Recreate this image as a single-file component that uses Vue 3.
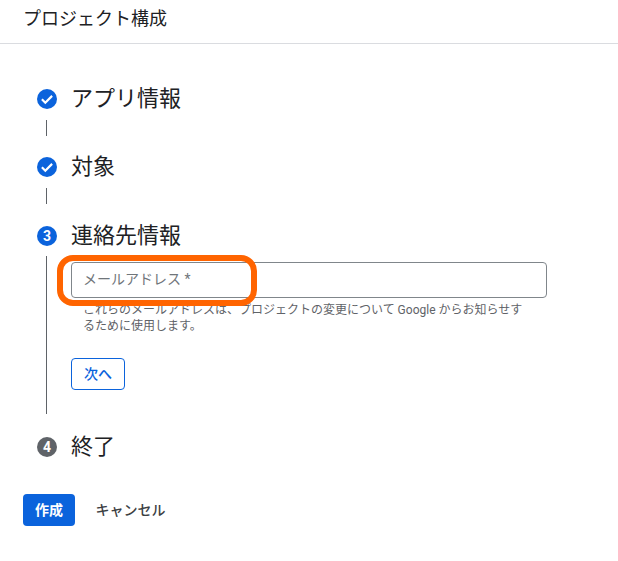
<script setup>
const steps = 4
</script>

<template>
  <div class="page">
    <header class="top">プロジェクト構成</header>
    <main class="steps">
      <section class="step">
        <div class="head">
          <svg class="badge" viewBox="0 0 20 20"><circle cx="10" cy="10" r="10" fill="#0b63dc" /><path d="M4.9 10.3 8.3 13.7 15.1 6.9" fill="none" stroke="#fff" stroke-width="2.2" /></svg>
          <h2>アプリ情報</h2>
        </div>
        <div class="link"></div>
      </section>
      <section class="step">
        <div class="head">
          <svg class="badge" viewBox="0 0 20 20"><circle cx="10" cy="10" r="10" fill="#0b63dc" /><path d="M4.9 10.3 8.3 13.7 15.1 6.9" fill="none" stroke="#fff" stroke-width="2.2" /></svg>
          <h2>対象</h2>
        </div>
        <div class="link"></div>
      </section>
      <section class="step third">
        <div class="head">
          <span class="badge num">3</span>
          <h2>連絡先情報</h2>
        </div>
        <div class="body">
          <div class="field">
            <span class="placeholder">メールアドレス *</span>
            <span class="mark"></span>
          </div>
          <p class="help">これらのメールアドレスは、プロジェクトの変更について Google からお知らせするために使用します。</p>
          <button class="next">次へ</button>
        </div>
      </section>
      <section class="step last">
        <div class="head">
          <span class="badge num grey">4</span>
          <h2>終了</h2>
        </div>
      </section>
    </main>
    <footer class="actions">
      <button class="create">作成</button>
      <button class="cancel">キャンセル</button>
    </footer>
  </div>
</template>

<style scoped>
.page {
  width: 618px;
  height: 561px;
  background: #fff;
  color: #202124;
  font-family: Roboto, "Noto Sans CJK JP", sans-serif;
  overflow: hidden;
}
.top {
  box-sizing: border-box;
  border-bottom: 1px solid #dadce0;
  height: 44px;
  padding: 6px 0 0 23px;
  font-size: 18px;
  line-height: 26px;
}
.steps {
  padding: 41px 0 0 37px;
}
.step {
  display: flex;
  flex-direction: column;
}
.step + .step {
  margin-top: 17px;
}
.step.third {
  margin-top: 18px;
}
.step.last {
  margin-top: 19px;
}
.head {
  display: flex;
  align-items: center;
  height: 28px;
  gap: 14px;
}
.head h2 {
  margin: 0;
  font-size: 22px;
  font-weight: 400;
  line-height: 28px;
}
.badge {
  width: 20px;
  height: 20px;
  flex: none;
}
.num {
  display: flex;
  align-items: center;
  justify-content: center;
  border-radius: 50%;
  background: #0b63dc;
  color: #fff;
  font-size: 14px;
  font-weight: 700;
}
.grey {
  background: #5f6368;
}
.link {
  width: 1px;
  height: 16px;
  margin: 7px 0 0 9px;
  background: #5f6368;
}
.body {
  margin: 6px 0 0 9px;
  border-left: 1px solid #5f6368;
  padding: 6px 0 24px 24px;
  display: flex;
  flex-direction: column;
  align-items: flex-start;
}
.field {
  position: relative;
  width: 476px;
  height: 36px;
  box-sizing: border-box;
  border: 1px solid #80868b;
  border-radius: 4px;
  padding-left: 11px;
  line-height: 32px;
  font-size: 14px;
  color: #70757a;
}
.mark {
  position: absolute;
  left: -15px;
  top: -8px;
  width: 200px;
  height: 51px;
  box-sizing: border-box;
  border: 6px solid #ff6400;
  border-radius: 16px;
}
.help {
  width: 444px;
  margin: 4px 0 0 12px;
  font-size: 12px;
  line-height: 16px;
  color: #5f6368;
}
.next {
  margin-top: 24px;
  width: 54px;
  height: 32px;
  padding: 0 0 2px;
  background: #fff;
  border: 1px solid #0b63dc;
  border-radius: 4px;
  color: #0b63dc;
  font: 500 14px Roboto, "Noto Sans CJK JP", sans-serif;
}
.actions {
  display: flex;
  align-items: center;
  gap: 12px;
  margin: 33px 0 0 23px;
}
.create {
  width: 52px;
  height: 32px;
  padding: 0 0 2px;
  border: 0;
  border-radius: 4px;
  background: #0b63dc;
  color: #fff;
  font: 700 14px Roboto, "Noto Sans CJK JP", sans-serif;
}
.cancel {
  width: 87px;
  height: 32px;
  padding: 0 0 2px;
  border: 0;
  background: none;
  color: #3c4043;
  font: 500 14px Roboto, "Noto Sans CJK JP", sans-serif;
}
</style>
